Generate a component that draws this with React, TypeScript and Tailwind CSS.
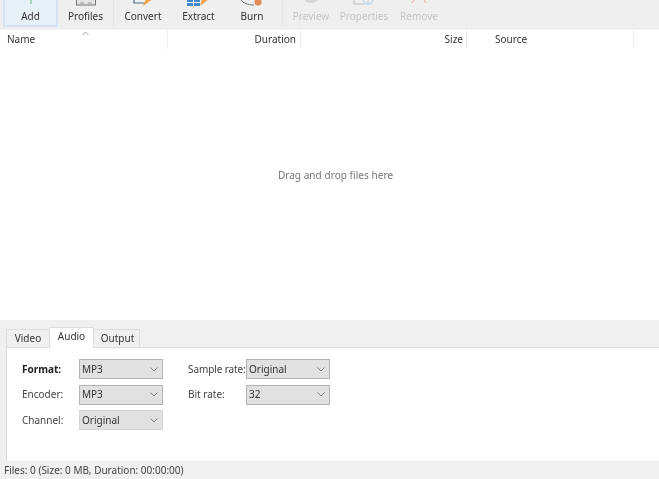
import React from "react";

function Tool({ w, label, dim, active, children }: { w: string; label: string; dim?: boolean; active?: boolean; children: React.ReactNode }) {
  return (
    <div className={`${w} h-[27px] shrink-0 flex flex-col items-center ${active ? "bg-[#e9f1f8] border-x-2 border-b-2 border-[#d3e3f1]" : ""}`}>
      <div className="h-[8px] shrink-0 flex items-start justify-center">{children}</div>
      <div className={`h-[16px] shrink-0 leading-[16px] text-[10px] whitespace-nowrap ${dim ? "text-[#c4c4c4]" : "text-[#333333]"}`}>{label}</div>
    </div>
  );
}

function Select({ value, light }: { value: string; light?: boolean }) {
  return (
    <div className={`w-[84px] h-[20px] flex items-center justify-between pl-[2px] pr-[4px] bg-[#e1e1e1] border ${light ? "border-[#d4d4d4]" : "border-[#b4b4b4]"}`}>
      <span className="text-[10px] text-[#333333]">{value}</span>
      <svg width="8" height="5" viewBox="0 0 8 5" fill="none" stroke="#777777" strokeWidth="0.9"><path d="M0.5 0.5 4 4 7.5 0.5" /></svg>
    </div>
  );
}

function Sep() {
  return <div className="w-px h-[26px] bg-[#e4e4e4] shrink-0" />;
}

export default function App() {
  return (
    <div className="w-[659px] h-[479px] bg-white flex flex-col overflow-hidden blur-[0.5px] text-[#333333] font-['Noto_Sans','Open_Sans',sans-serif]">
      {/* toolbar */}
      <div className="h-[29px] shrink-0 bg-[#efefef] flex items-start pl-[3px] overflow-hidden">
        <Tool w="w-[55px]" label="Add" active>
          <svg width="20" height="8" viewBox="0 0 20 8" fill="none"><path d="M10 0v4" stroke="#5bb98c" strokeWidth="1" /></svg>
        </Tool>
        <Tool w="w-[55px]" label="Profiles">
          <svg width="24" height="8" viewBox="0 0 24 8"><rect x="2.5" y="-3" width="19" height="8" fill="#e4e4e4" stroke="#777777" strokeWidth="1" /><path d="M6 3h4M14 3h4" stroke="#999999" strokeWidth="1" /></svg>
        </Tool>
        <Sep />
        <Tool w="w-[58px]" label="Convert">
          <svg width="28" height="8" viewBox="0 0 28 8" fill="none"><path d="M5 0v3h12" stroke="#5b6b7a" strokeWidth="1.2" /><path d="M14 6l10-7h-7z" fill="#f3a24a" /></svg>
        </Tool>
        <Tool w="w-[53px]" label="Extract">
          <svg width="28" height="8" viewBox="0 0 28 8"><rect x="2" y="0" width="6" height="2" fill="#3f88c9" /><rect x="2" y="3" width="6" height="3" fill="#3f88c9" /><rect x="9" y="0" width="6" height="2" fill="#3f88c9" /><rect x="9" y="3" width="6" height="3" fill="#3f88c9" /><path d="M15 6l9-7h-7z" fill="#f3a24a" /></svg>
        </Tool>
        <Tool w="w-[54px]" label="Burn">
          <svg width="28" height="8" viewBox="0 0 28 8" fill="none"><path d="M3 0c2 3 7 5 13 5" stroke="#777777" strokeWidth="1" /><circle cx="20" cy="2" r="3.5" fill="#e08b55" /></svg>
        </Tool>
        <div className="w-[3px] shrink-0" />
        <Sep />
        <Tool w="w-[56px]" label="Preview" dim>
          <svg width="24" height="8" viewBox="0 0 24 8"><ellipse cx="12" cy="0" rx="6" ry="3" fill="#d5d5d5" /></svg>
        </Tool>
        <Tool w="w-[50px]" label="Properties" dim>
          <svg width="28" height="8" viewBox="0 0 28 8" fill="none"><path d="M4 0v4h10" stroke="#c0c0c0" strokeWidth="1" /><circle cx="18" cy="0" r="4.5" stroke="#a9cbe6" strokeWidth="1" /><path d="M18 1v3" stroke="#a9cbe6" strokeWidth="1" /></svg>
        </Tool>
        <Tool w="w-[60px]" label="Remove" dim>
          <svg width="24" height="8" viewBox="0 0 24 8" fill="none"><path d="M5 3l2-3M19 3l-2-3" stroke="#f0b5b0" strokeWidth="1.2" /></svg>
        </Tool>
      </div>

      {/* list header */}
      <div className="relative h-[20px] shrink-0 grid grid-cols-[168px_133px_166px_167px_1fr] text-[10px] leading-[19px] border-t border-[#f4f4f4]">
        <div className="pl-[7px] border-r border-[#ececec]">Name</div>
        <div className="text-right pr-[4px] border-r border-[#ececec]">Duration</div>
        <div className="text-right pr-[3px] border-r border-[#ececec]">Size</div>
        <div className="pl-[28px] border-r border-[#ececec]">Source</div>
        <div />
        <svg className="absolute left-[82px] top-[1px]" width="7" height="5" viewBox="0 0 7 5" fill="none" stroke="#999999" strokeWidth="0.9"><path d="M0.5 4 3.5 1 6.5 4" /></svg>
      </div>

      {/* drop area */}
      <div className="h-[271px] shrink-0 flex items-center justify-center pb-[19px] pl-[12px]">
        <span className="text-[10px] text-[#777777] tracking-[0.05px]">Drag and drop files here</span>
      </div>

      {/* bottom panel */}
      <div className="flex-1 bg-[#f0f0f0] flex flex-col min-h-0">
        <div className="h-[27px] shrink-0 flex items-end pl-[6px] text-[10px]">
          <div className="w-[43px] h-[18px] border border-b-0 border-r-0 border-[#dddddd] flex items-center justify-center">Video</div>
          <div className="w-[45px] h-[21px] border border-b-0 border-[#dddddd] bg-white flex items-start justify-center leading-[17px] relative top-px z-10">Audio</div>
          <div className="w-[46px] h-[18px] border border-b-0 border-l-0 border-[#dddddd] flex items-center justify-center pl-[2px]">Output</div>
        </div>
        <div className="h-[114px] shrink-0 ml-[6px] bg-white border-t border-l border-[#dddddd] pt-[11px] pl-[15px]">
          <div className="grid grid-cols-[57px_84px_25px_58px_84px] gap-y-[5.5px] items-center text-[10px]">
            <div className="font-bold text-[#222222]">Format:</div>
            <Select value="MP3" />
            <div />
            <div className="whitespace-nowrap text-[#444444] tracking-[-0.1px]">Sample rate:</div>
            <Select value="Original" />
            <div className="text-[#444444]">Encoder:</div>
            <Select value="MP3" />
            <div />
            <div className="text-[#444444]">Bit rate:</div>
            <Select value="32" />
            <div className="text-[#444444]">Channel:</div>
            <Select value="Original" light />
          </div>
        </div>
        <div className="flex-1 flex items-center pl-[4px] pt-[1px] text-[10px] text-[#444444]">Files: 0 (Size: 0 MB, Duration: 00:00:00)</div>
      </div>
    </div>
  );
}
